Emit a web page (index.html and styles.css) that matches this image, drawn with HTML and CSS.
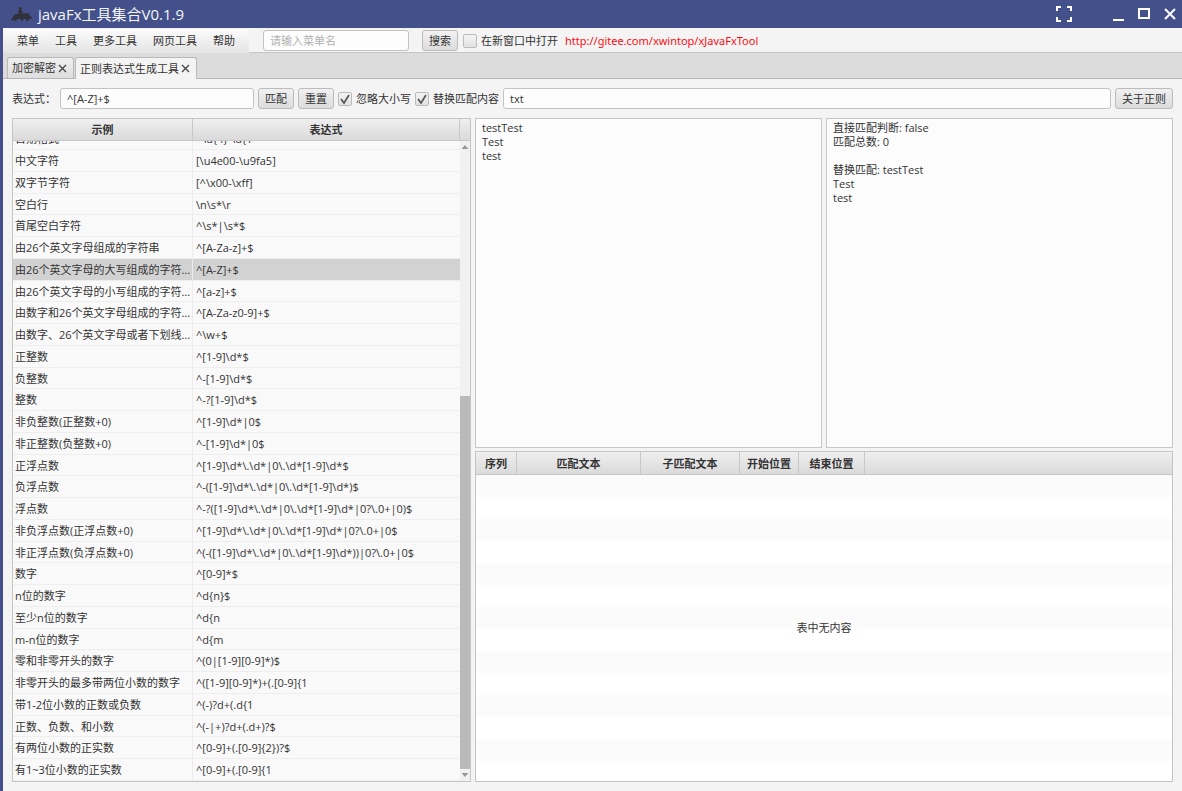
FILE: index.html
```html
<!DOCTYPE html>
<html lang="zh-CN">
<head>
<meta charset="utf-8">
<title>javaFx工具集合V0.1.9</title>
<link rel="stylesheet" href="styles.css">
</head>
<body>
<div class="window">
  <header class="titlebar">
    <svg class="logo" viewBox="0 0 22 15" aria-hidden="true"><path d="M0 13 2 10 3 8 5 7 8 7 7 5 8 3 8 1 9 0 11 1 10 3 12 5 11 7 15 6 18 7 19 9 21 10 20 12 18 12 17 14 15 14 15 12 12 12 12 14 10 14 10 12 6 12 5 14 3 14 3 12 1 14z" fill="#2f313b"/></svg>
    <h1 class="title">javaFx工具集合V0.1.9</h1>
    <button class="win-btn full" aria-label="全屏"><svg width="16" height="16" viewBox="0 0 16 16"><path d="M1 5V1h4M11 1h4v4M15 11v4h-4M5 15H1v-4"/></svg></button>
    <button class="win-btn" aria-label="最小化"><svg width="12" height="14" viewBox="0 0 12 14"><path d="M1 13h11"/></svg></button>
    <button class="win-btn" aria-label="最大化"><svg width="12" height="12" viewBox="0 0 12 12"><path d="M1 1h10v9H1z"/></svg></button>
    <button class="win-btn" aria-label="关闭"><svg width="12" height="12" viewBox="0 0 12 12"><path class="thin" d="M1 1l10 10M11 1L1 11"/></svg></button>
  </header>
  <div class="body">
    <div class="menubar">
      <nav class="menus">
        <button>菜单</button><button>工具</button><button>更多工具</button><button>网页工具</button><button>帮助</button>
      </nav>
      <input class="field search" type="text" placeholder="请输入菜单名" aria-label="菜单名">
      <button class="btn">搜索</button>
      <label class="check"><input type="checkbox">在新窗口中打开</label>
      <a class="link" href="http://gitee.com/xwintop/xJavaFxTool">http://gitee.com/xwintop/xJavaFxTool</a>
    </div>
    <div class="tabs">
      <div class="tab"><button>加密解密</button><button class="close" aria-label="关闭加密解密"><svg width="9" height="9" viewBox="0 0 9 9"><path d="M1 1l7 7M8 1L1 8"/></svg></button></div>
      <div class="tab active"><button>正则表达式生成工具</button><button class="close" aria-label="关闭正则表达式生成工具"><svg width="9" height="9" viewBox="0 0 9 9"><path d="M1 1l7 7M8 1L1 8"/></svg></button></div>
    </div>
    <main class="content">
      <form class="toolbar">
        <label class="expr-label" for="expr">表达式：</label>
        <input class="field expr" id="expr" type="text" value="^[A-Z]+$">
        <button class="btn" type="button">匹配</button>
        <button class="btn" type="button">重置</button>
        <label class="check"><input type="checkbox" checked>忽略大小写</label>
        <label class="check"><input type="checkbox" checked>替换匹配内容</label>
        <input class="field replace" type="text" value="txt" aria-label="替换内容">
        <button class="btn" type="button">关于正则</button>
      </form>
      <div class="panes">
        <section class="examples">
          <table class="grid">
            <thead><tr><th>示例</th><th>表达式</th><th class="corner"></th></tr></thead>
            <tbody>
              <tr><td>日期格式</td><td>^\d{4}-\d{1</td></tr>
              <tr><td>中文字符</td><td>[\u4e00-\u9fa5]</td></tr>
              <tr><td>双字节字符</td><td>[^\x00-\xff]</td></tr>
              <tr><td>空白行</td><td>\n\s*\r</td></tr>
              <tr><td>首尾空白字符</td><td>^\s*|\s*$</td></tr>
              <tr><td>由26个英文字母组成的字符串</td><td>^[A-Za-z]+$</td></tr>
              <tr class="selected"><td>由26个英文字母的大写组成的字符串</td><td>^[A-Z]+$</td></tr>
              <tr><td>由26个英文字母的小写组成的字符串</td><td>^[a-z]+$</td></tr>
              <tr><td>由数字和26个英文字母组成的字符串</td><td>^[A-Za-z0-9]+$</td></tr>
              <tr><td>由数字、26个英文字母或者下划线组成</td><td>^\w+$</td></tr>
              <tr><td>正整数</td><td>^[1-9]\d*$</td></tr>
              <tr><td>负整数</td><td>^-[1-9]\d*$</td></tr>
              <tr><td>整数</td><td>^-?[1-9]\d*$</td></tr>
              <tr><td>非负整数(正整数+0)</td><td>^[1-9]\d*|0$</td></tr>
              <tr><td>非正整数(负整数+0)</td><td>^-[1-9]\d*|0$</td></tr>
              <tr><td>正浮点数</td><td>^[1-9]\d*\.\d*|0\.\d*[1-9]\d*$</td></tr>
              <tr><td>负浮点数</td><td>^-([1-9]\d*\.\d*|0\.\d*[1-9]\d*)$</td></tr>
              <tr><td>浮点数</td><td>^-?([1-9]\d*\.\d*|0\.\d*[1-9]\d*|0?\.0+|0)$</td></tr>
              <tr><td>非负浮点数(正浮点数+0)</td><td>^[1-9]\d*\.\d*|0\.\d*[1-9]\d*|0?\.0+|0$</td></tr>
              <tr><td>非正浮点数(负浮点数+0)</td><td>^(-([1-9]\d*\.\d*|0\.\d*[1-9]\d*))|0?\.0+|0$</td></tr>
              <tr><td>数字</td><td>^[0-9]*$</td></tr>
              <tr><td>n位的数字</td><td>^d{n}$</td></tr>
              <tr><td>至少n位的数字</td><td>^d{n</td></tr>
              <tr><td>m-n位的数字</td><td>^d{m</td></tr>
              <tr><td>零和非零开头的数字</td><td>^(0|[1-9][0-9]*)$</td></tr>
              <tr><td>非零开头的最多带两位小数的数字</td><td>^([1-9][0-9]*)+(.[0-9]{1</td></tr>
              <tr><td>带1-2位小数的正数或负数</td><td>^(-)?d+(.d{1</td></tr>
              <tr><td>正数、负数、和小数</td><td>^(-|+)?d+(.d+)?$</td></tr>
              <tr><td>有两位小数的正实数</td><td>^[0-9]+(.[0-9]{2})?$</td></tr>
              <tr><td>有1~3位小数的正实数</td><td>^[0-9]+(.[0-9]{1</td></tr>
            </tbody>
          </table>
          <div class="scroll" aria-hidden="true"><span class="arrow up"></span><span class="space"></span><span class="thumb"></span><span class="arrow down"></span></div>
        </section>
        <section class="results">
          <div class="texts">
            <textarea aria-label="待匹配文本">testTest
Test
test</textarea>
            <textarea aria-label="匹配结果" readonly>直接匹配判断: false
匹配总数: 0

替换匹配: testTest
Test
test</textarea>
          </div>
          <div class="matches">
            <table class="match-head">
              <thead><tr><th class="c1">序列</th><th class="c2">匹配文本</th><th class="c3">子匹配文本</th><th class="c4">开始位置</th><th class="c5">结束位置</th><th></th></tr></thead>
            </table>
            <div class="empty">表中无内容</div>
          </div>
        </section>
      </div>
    </main>
  </div>
</div>
</body>
</html>
```
FILE: styles.css
```css
* { box-sizing: border-box; }
body, button, input, textarea, table {
  font-family: "Open Sans", "Noto Sans CJK SC", sans-serif;
  font-size: 11px;
  line-height: 14px;
  color: #333;
}
body { margin: 0; }
button { border: 0; padding: 0; background: none; white-space: nowrap; }
.window { height: 100vh; display: flex; flex-direction: column; background: #435089; }
.titlebar { height: 28px; flex: none; display: flex; align-items: center; padding: 0 6px 0 11px; }
.logo { width: 22px; height: 15px; }
.title { margin: 0 auto 0 5px; font-size: 15px; line-height: 20px; font-weight: 400; color: #f4f5fa; }
.win-btn { width: 12px; height: 16px; margin-left: 14px; display: flex; align-items: center; }
.win-btn.full { width: 16px; margin-right: 26px; }
.win-btn path { fill: none; stroke: #fff; stroke-width: 2; }
.win-btn .thin { stroke-width: 2; }
.body { flex: 1; min-height: 0; display: flex; flex-direction: column; margin-left: 3px; background: #f4f4f4; }
.menubar { height: 25px; flex: none; display: flex; align-items: center; padding-top: 1px; border-bottom: 1px solid #c5c3c5; }
.menus { height: 24px; width: 246px; display: flex; gap: 16px; padding: 1px 0 0 14px; margin-right: 14px; background: linear-gradient(#fbfbfb, #e4e4e4); }
.field { height: 21px; min-width: 0; border: 1px solid #c3c3c3; border-radius: 3px; padding: 0 6px; background: #fdfdfd; outline: 0; }
.field::placeholder { color: #b2b2b2; opacity: 1; }
.search { width: 146px; margin-right: 13px; }
.btn { height: 21px; border: 1px solid #bcbcbc; border-radius: 3px; padding: 0 6px; background: linear-gradient(#f1f1f1, #dcdcdc); }
.check { display: flex; align-items: center; gap: 4px; white-space: nowrap; }
.check input { appearance: none; width: 14px; height: 14px; margin: 0; border: 1px solid #bbb; border-radius: 2px; background: linear-gradient(#f3f3f3, #e2e2e2); }
.check input:checked { background: url("data:image/svg+xml,%3Csvg xmlns='http://www.w3.org/2000/svg' viewBox='0 0 12 12'%3E%3Cpath d='M2 6l3 4 5-8' fill='none' stroke='%23555' stroke-width='1.7'/%3E%3C/svg%3E"), linear-gradient(#f3f3f3, #e2e2e2); }
.menubar .check { margin: 0 7px 0 5px; }
.link { font-family: "Noto Sans", sans-serif; color: #fb0d12; text-decoration: none; }
.tabs { height: 26px; flex: none; display: flex; align-items: flex-end; gap: 1px; padding-left: 4px; background: #dcdcdc; border-bottom: 1px solid #b9b7b9; }
.tab { height: 21px; display: flex; align-items: center; gap: 2px; padding: 0 6px 0 4px; border: 1px solid #b9b9b9; border-bottom: 0; border-radius: 3px 3px 0 0; background: linear-gradient(#efefef, #dedede); }
.tab.active { height: 22px; margin-bottom: -1px; background: #f4f4f4; }
.close { display: flex; }
.close path { fill: none; stroke: #444; stroke-width: 1.3; }
.content { flex: 1; min-height: 0; display: flex; flex-direction: column; gap: 9px; padding: 9px; }
.toolbar { display: flex; align-items: center; gap: 4px; }
.expr-label { width: 44px; white-space: nowrap; }
.expr { width: 194px; }
.replace { flex: 1; }
.panes { flex: 1; min-height: 0; display: flex; gap: 4px; }
.examples { width: 459px; flex: none; display: flex; position: relative; border: 1px solid #c4c6c4; background: #f9f9f9; }
.grid { flex: 1; min-width: 0; display: flex; flex-direction: column; }
.grid thead { flex: none; }
.grid thead tr { display: grid; grid-template-columns: 180px 1fr 10px; height: 22px; }
th { padding: 4px 0 2px; font-weight: 700; border-right: 1px solid #c9c7c9; border-bottom: 1px solid #c6c6c6; background: linear-gradient(#efefef, #dadada); }
.grid .corner { border-right: 0; }
.grid tbody { flex: 1; min-height: 0; display: flex; flex-direction: column; justify-content: flex-end; overflow: hidden; margin-right: 10px; }
.grid tbody tr { flex: none; height: 22px; display: grid; grid-template-columns: 180px 1fr; border-bottom: 1px solid #eeeeee; }
.grid tbody tr:nth-child(4n) { height: 21px; }
td { min-width: 0; padding: 4px 0 0 3px; white-space: nowrap; overflow: hidden; text-overflow: ellipsis; }
td:first-child { padding-left: 2px; border-right: 1px solid #ececec; }
.grid .selected { background: #d2d2d2; }
.scroll { position: absolute; top: 22px; right: 0; bottom: 0; width: 10px; display: flex; flex-direction: column; align-items: center; background: #f1f1f1; }
.arrow { width: 7px; height: 4px; margin: 4px 0; background: #999; }
.up { clip-path: polygon(50% 0, 100% 100%, 0 100%); }
.down { clip-path: polygon(0 0, 100% 0, 50% 100%); }
.space { flex: 243; }
.thumb { flex: 373; width: 10px; background: #bababa; }
.results { flex: 1; min-width: 0; display: flex; flex-direction: column; gap: 3px; }
.texts { flex: 1 1 0; display: flex; gap: 4px; }
textarea { flex: 1; min-width: 0; resize: none; border: 1px solid #c6c8c6; padding: 2px 6px; background: #fcfcfc; outline: 0; }
.matches { flex: 1 1 0; display: flex; flex-direction: column; border: 1px solid #c4c4c4; }
.match-head { width: 100%; table-layout: fixed; border-collapse: separate; border-spacing: 0; }
.match-head th { height: 23px; }
.c1 { width: 41px; }
.c2 { width: 124px; }
.c3 { width: 99px; }
.c4 { width: 59px; }
.c5 { width: 66px; }
.match-head th:last-child { border-right: 0; }
.empty { flex: 1; display: flex; align-items: center; justify-content: center; background: repeating-linear-gradient(#fbfbfb 0 22px, #fff 22px 44px); }
```
